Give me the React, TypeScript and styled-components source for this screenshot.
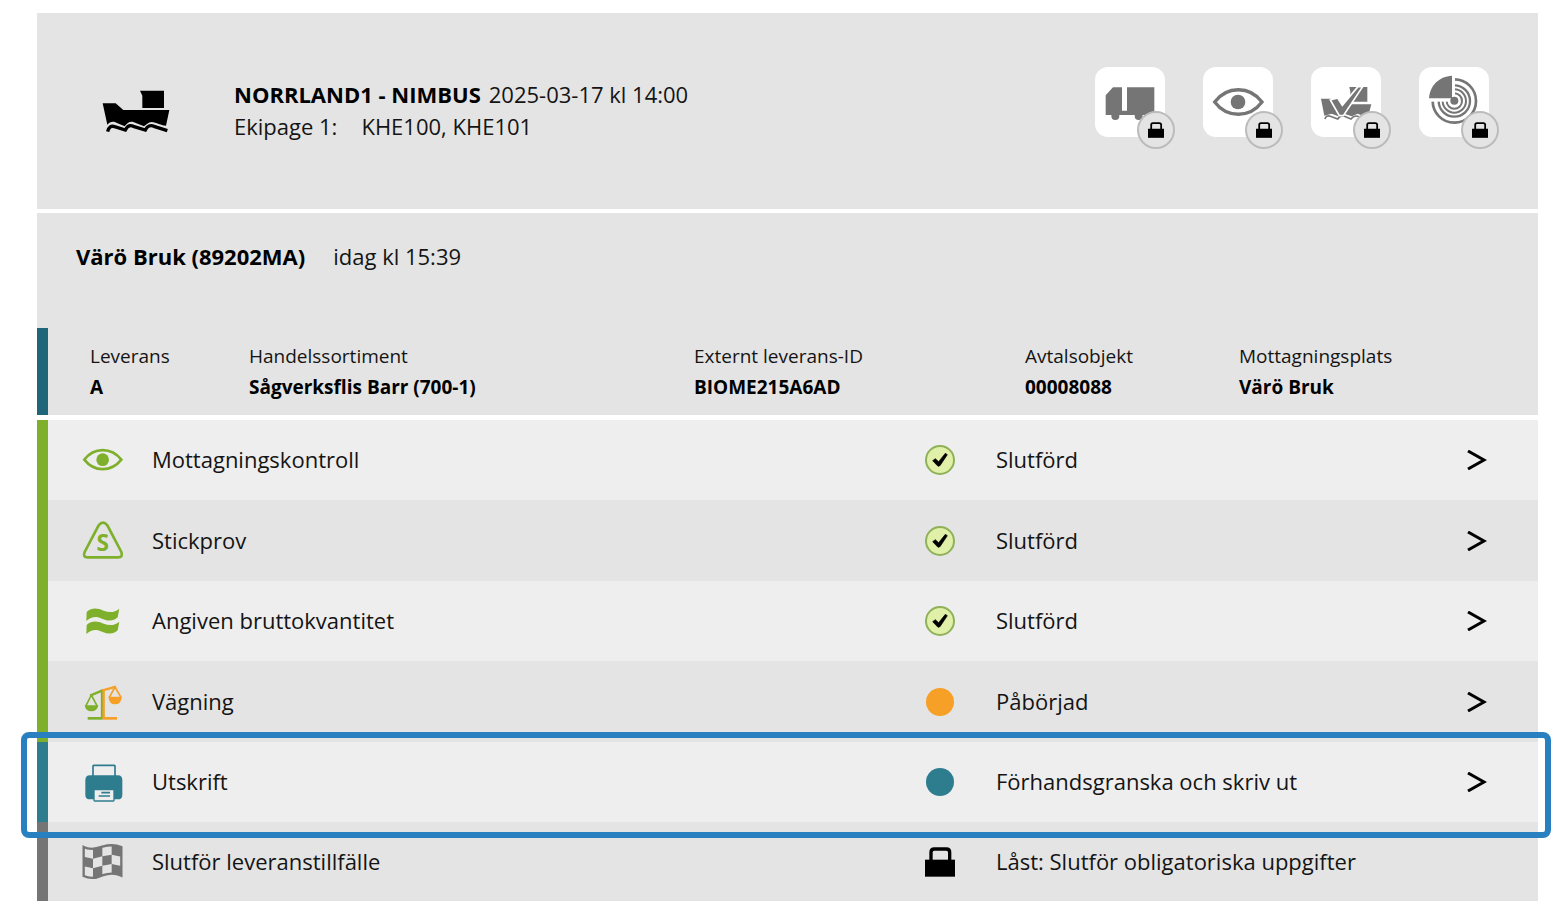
import React from "react";
import styled, { createGlobalStyle } from "styled-components";

const GREEN = "#7fb02c";
const TEAL = "#2e7d8f";
const ORANGE = "#f6a028";
const GRAY = "#757575";

const GlobalStyle = createGlobalStyle`
  * { box-sizing: border-box; }
  body {
    margin: 0;
    background: #fff;
    color: #141414;
    font-family: "Open Sans", "Noto Sans", sans-serif;
    font-size: 22px;
    line-height: 32px;
  }
  svg { display: block; }
`;

const Page = styled.main`
  padding: 13px 28px 13px 37px;
`;

const Header = styled.header`
  display: flex;
  align-items: flex-start;
  height: 196px;
  margin-bottom: 4px;
  padding: 54px 49px 0 65px;
  background: #e4e4e4;
`;

const BoatBox = styled.div`
  width: 132px;
  padding-top: 22px;
`;

const TripText = styled.div`
  flex: 1;
  padding-top: 11px;
`;

const Line = styled.p<{ $gap: number }>`
  display: flex;
  gap: ${(p) => p.$gap}px;
  margin: 0;
`;

const Tiles = styled.nav`
  display: flex;
  gap: 38px;
`;

const Tile = styled.button`
  position: relative;
  width: 70px;
  height: 70px;
  padding: 0;
  border: 0;
  border-radius: 13px;
  background: #fff;
  cursor: pointer;
`;

const Badge = styled.span`
  position: absolute;
  right: -10px;
  bottom: -12px;
  display: flex;
  align-items: center;
  justify-content: center;
  width: 38px;
  height: 38px;
  border: 2px solid #bcbcbc;
  border-radius: 50%;
  background: #e4e4e4;
`;

const Site = styled.section`
  margin-bottom: 5px;
  background: #e4e4e4;
`;

const SiteTitle = styled.div`
  display: flex;
  gap: 28px;
  height: 115px;
  padding: 27px 39px 0;
`;

const Facts = styled.dl`
  display: grid;
  grid-template-columns: 159fr 445fr 331fr 214fr 299fr;
  margin: 0;
  height: 87px;
  padding: 13px 0 0 42px;
  border-left: 11px solid #20667a;
  font-size: 19px;
  line-height: 31px;
`;

const FactValue = styled.dd`
  margin: 0;
  font-weight: 700;
  color: #000;
`;

const Strong = styled.strong`
  font-weight: 700;
  color: #000;
`;

const Steps = styled.ul`
  margin: 0;
  padding: 0;
  list-style: none;
`;

const Step = styled.li<{ $bar: string }>`
  position: relative;
  display: grid;
  grid-template-columns: 104px 773fr 71px 419fr 123px;
  align-items: center;
  height: 80px;
  border-left: 11px solid ${(p) => p.$bar};
  background: #eeeeee;
  &:nth-child(even) {
    height: 81px;
    background: #e4e4e4;
  }
  &:last-child { height: 79px; }
`;

const StepIcon = styled.span`
  padding-left: 34px;
`;

const StepText = styled.span`
  padding-bottom: 2px;
`;

const OpenButton = styled.button`
  justify-self: center;
  padding: 6px;
  border: 0;
  background: none;
  cursor: pointer;
`;

const Highlight = styled.span`
  position: absolute;
  z-index: 1;
  inset: -10px -13px -16px -27px;
  border: 6px solid #2980c1;
  border-radius: 8px;
  pointer-events: none;
`;

const Lock = ({ size }: { size: number }) => (
  <svg width={size} height={size} viewBox="0 0 90 90">
    <rect x="0" y="38" width="90" height="51" />
    <path d="M18 42V16Q18 6 28 6H64Q74 6 74 16V42" fill="none" stroke="#000" strokeWidth="10" />
  </svg>
);

const Boat = () => (
  <svg width="68" height="44" viewBox="66 58 204 132">
    <path d="M180 63H252V115H187V78Z" />
    <path d="M68 101H107L130 121H268L258 168C245 168 228 158 215 157C204 158 199 165 192 170L160 157C148 154 142 161 134 170L104 157C94 155 88 159 82 165Z" />
    <path d="M83 186C86 172 94 167 104 171L136 181C142 169 150 165 160 170L196 181C202 169 212 165 222 170L262 183" fill="none" stroke="#000" strokeWidth="10" />
  </svg>
);

const TileSvg = ({ children }: { children: React.ReactNode }) => (
  <svg width="70" height="70" viewBox="0 0 210 210" fill={GRAY}>{children}</svg>
);

const TruckIcon = () => (
  <TileSvg>
    <path d="M32 85L54 61H81V131H96V61H178V144H32Z" />
    <circle cx="61" cy="147" r="12" />
    <circle cx="131" cy="147" r="12" />
  </TileSvg>
);

const InspectIcon = () => (
  <TileSvg>
    <path d="M35 105C72 56 140 56 177 105C140 154 72 154 35 105Z" fill="none" stroke={GRAY} strokeWidth="10" />
    <circle cx="105" cy="105" r="22" />
  </TileSvg>
);

const BoatCheckIcon = () => (
  <TileSvg>
    <path d="M115 60H169V104H118V74Z" />
    <path d="M30 95H58L78 112H181L173 142L160 148L140 140L122 148L100 140L82 148L62 140L40 146Z" />
    <path d="M42 156C44 148 50 145 58 148L80 156C85 148 92 145 100 148L120 156C126 148 132 145 140 148L166 156" fill="none" stroke={GRAY} strokeWidth="5" />
    <path d="M58 99L80 93L94 115L141 59H155L97 146H85Z" stroke="#fff" strokeWidth="5" />
  </TileSvg>
);

const DiscIcon = () => (
  <TileSvg>
    <g fill="none" stroke={GRAY}>
      <circle cx="106" cy="102" r="65" strokeWidth="8" />
      <circle cx="106" cy="102" r="47" strokeWidth="7" />
      <circle cx="106" cy="102" r="35" strokeWidth="6" />
      <circle cx="106" cy="102" r="23" strokeWidth="6" />
    </g>
    <path d="M20 20H108V104H20Z" fill="#fff" />
    <circle cx="106" cy="101" r="12" />
    <path d="M99 26V94H30C32 56 60 28 99 26Z" />
  </TileSvg>
);

const RowSvg = ({ children }: { children: React.ReactNode }) => (
  <svg width="42" height="42" viewBox="0 0 126 126">{children}</svg>
);

const EyeIcon = () => (
  <RowSvg>
    <path d="M7 62C36 24 88 24 118 62C88 100 36 100 7 62Z" fill="none" stroke={GREEN} strokeWidth="8" />
    <circle cx="62" cy="62" r="19" fill={GREEN} />
  </RowSvg>
);

const SampleIcon = () => (
  <RowSvg>
    <path d="M50 16Q63 0 76 16L118 96Q124 112 108 112H17Q1 112 8 96Z" fill="none" stroke={GREEN} strokeWidth="8" />
    <text x="62" y="93" textAnchor="middle" fontSize="68" fontWeight="700" fill={GREEN}>S</text>
  </RowSvg>
);

const ApproxIcon = () => {
  const wave = "M14 36C30 22 46 24 65 32C82 39 98 38 112 26L107 52C94 64 80 64 60 56C42 48 28 50 13 63Z";
  return (
    <RowSvg>
      <path d={wave} fill={GREEN} />
      <path d={wave} transform="translate(0 39)" fill={GREEN} />
    </RowSvg>
  );
};

const ScaleIcon = () => (
  <RowSvg>
    <g fill="none" stroke={GREEN} strokeWidth="5">
      <path d="M17 112H62" strokeWidth="8" />
      <path d="M60 26V112" strokeWidth="7" />
      <path d="M24 44L62 28" strokeWidth="7" />
      <path d="M28 42L11 76M28 42L46 76" />
    </g>
    <path d="M8 73H49Q46 91 28 91Q11 91 8 73Z" fill={GREEN} />
    <g fill="none" stroke={ORANGE} strokeWidth="5">
      <path d="M62 112H105" strokeWidth="8" />
      <path d="M65 24V112" strokeWidth="7" />
      <path d="M62 28L102 17" strokeWidth="7" />
      <path d="M99 18L82 49M99 18L117 49" />
    </g>
    <path d="M79 47H120Q117 70 99 70Q82 70 79 47Z" fill={ORANGE} />
  </RowSvg>
);

const PrinterIcon = () => (
  <RowSvg>
    <rect x="33" y="13" width="66" height="40" rx="2" fill="#eee" stroke={TEAL} strokeWidth="5" />
    <path d="M24 43H108Q121 43 121 57V101Q121 115 108 115H24Q10 115 10 101V57Q10 43 24 43Z" fill={TEAL} />
    <rect x="36" y="86" width="60" height="34" rx="2" fill="#eee" stroke={TEAL} strokeWidth="4" />
    <path d="M58 95H84M50 105H84" stroke={TEAL} strokeWidth="5" />
  </RowSvg>
);

const FlagIcon = () => {
  const xs = [5, 33, 61, 89, 118];
  const tops = [18, 24, 17, 13, 18];
  const bottoms = [105, 111, 103, 97, 104];
  const at = (col: number, row: number) =>
    `${xs[col]} ${Math.round(tops[col] + ((bottoms[col] - tops[col]) * row) / 3)}`;
  const cells: string[] = [];
  for (let c = 0; c < 4; c++) {
    for (let r = 0; r < 3; r++) {
      if ((c + r) % 2 === 1) cells.push(`M${at(c, r)}L${at(c + 1, r)}L${at(c + 1, r + 1)}L${at(c, r + 1)}Z`);
    }
  }
  return (
    <RowSvg>
      <path d={cells.join("")} fill={GRAY} />
      <path
        d="M5 18C24 28 42 24 61 17C82 11 100 11 118 18V104C100 96 82 96 61 103C42 112 24 114 5 105Z"
        fill="none"
        stroke={GRAY}
        strokeWidth="7"
      />
    </RowSvg>
  );
};

const DoneMark = () => (
  <svg width="30" height="30" viewBox="0 0 90 90">
    <circle cx="45" cy="45" r="42" fill="#e1f0a9" stroke="#8fb158" strokeWidth="6" />
    <path d="M23 47L31 41L41 50L61 25L67 29L45 62L39 64Z" stroke="#000" strokeWidth="2" strokeLinejoin="round" />
  </svg>
);

const Dot = ({ color }: { color: string }) => (
  <svg width="30" height="30" viewBox="0 0 30 30">
    <circle cx="15" cy="15" r="14" fill={color} />
  </svg>
);

const Chevron = () => (
  <svg width="20" height="20" viewBox="0 0 20 20">
    <path d="M1 1L17 10L1 19" fill="none" stroke="#000" strokeWidth="3" />
  </svg>
);

const tiles = [
  { label: "Fordon", icon: <TruckIcon /> },
  { label: "Mottagningskontroll", icon: <InspectIcon /> },
  { label: "Lossning", icon: <BoatCheckIcon /> },
  { label: "Stockmätning", icon: <DiscIcon /> },
];

const facts = [
  ["Leverans", "A"],
  ["Handelssortiment", "Sågverksflis Barr (700-1)"],
  ["Externt leverans-ID", "BIOME215A6AD"],
  ["Avtalsobjekt", "00008088"],
  ["Mottagningsplats", "Värö Bruk"],
];

const steps = [
  { name: "Mottagningskontroll", icon: <EyeIcon />, mark: <DoneMark />, status: "Slutförd", bar: GREEN, open: true },
  { name: "Stickprov", icon: <SampleIcon />, mark: <DoneMark />, status: "Slutförd", bar: GREEN, open: true },
  { name: "Angiven bruttokvantitet", icon: <ApproxIcon />, mark: <DoneMark />, status: "Slutförd", bar: GREEN, open: true },
  { name: "Vägning", icon: <ScaleIcon />, mark: <Dot color={ORANGE} />, status: "Påbörjad", bar: GREEN, open: true },
  { name: "Utskrift", icon: <PrinterIcon />, mark: <Dot color={TEAL} />, status: "Förhandsgranska och skriv ut", bar: TEAL, open: true, current: true },
  { name: "Slutför leveranstillfälle", icon: <FlagIcon />, mark: <Lock size={30} />, status: "Låst: Slutför obligatoriska uppgifter", bar: GRAY, open: false },
];

export default function App() {
  return (
    <>
      <GlobalStyle />
      <Page>
        <Header>
          <BoatBox><Boat /></BoatBox>
          <TripText>
            <Line $gap={8}><Strong>NORRLAND1 - NIMBUS</Strong><span>2025-03-17 kl 14:00</span></Line>
            <Line $gap={24}><span>Ekipage 1:</span><span>KHE100, KHE101</span></Line>
          </TripText>
          <Tiles>
            {tiles.map((t) => (
              <Tile key={t.label} type="button" aria-label={t.label}>
                {t.icon}
                <Badge><Lock size={16} /></Badge>
              </Tile>
            ))}
          </Tiles>
        </Header>
        <Site>
          <SiteTitle><Strong>Värö Bruk (89202MA)</Strong><span>idag kl 15:39</span></SiteTitle>
          <Facts>
            {facts.map(([label, value]) => (
              <div key={label}>
                <dt>{label}</dt>
                <FactValue>{value}</FactValue>
              </div>
            ))}
          </Facts>
        </Site>
        <Steps>
          {steps.map((s) => (
            <Step key={s.name} $bar={s.bar}>
              <StepIcon>{s.icon}</StepIcon>
              <StepText>{s.name}</StepText>
              {s.mark}
              <StepText>{s.status}</StepText>
              {s.open && <OpenButton type="button" aria-label={`Öppna ${s.name}`}><Chevron /></OpenButton>}
              {s.current && <Highlight />}
            </Step>
          ))}
        </Steps>
      </Page>
    </>
  );
}
